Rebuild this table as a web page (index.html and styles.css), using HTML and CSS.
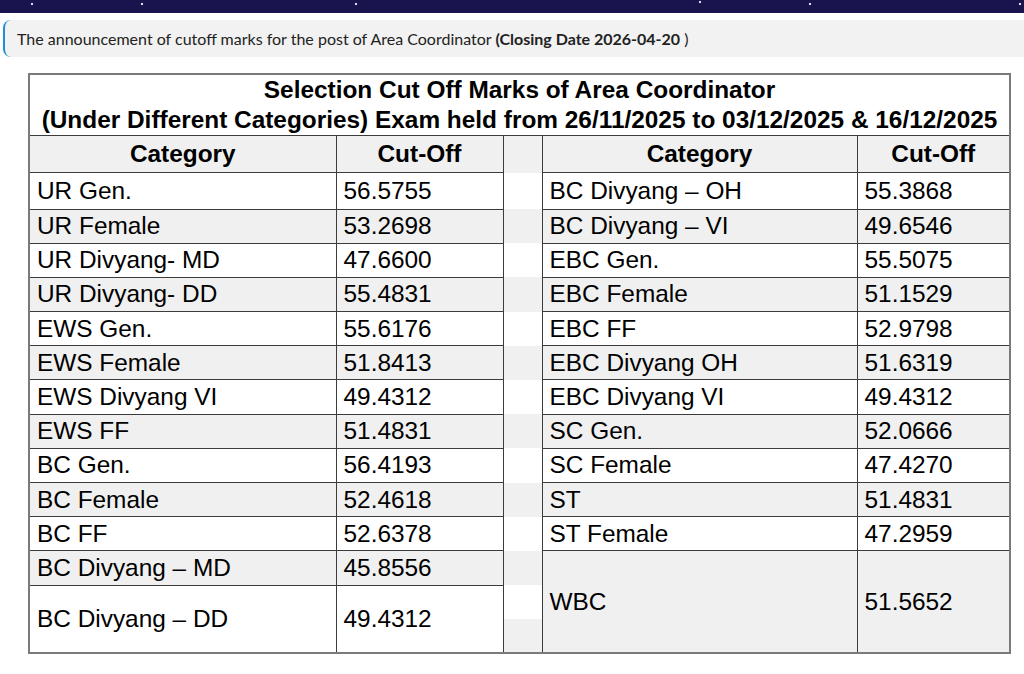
FILE: index.html
```html
<!DOCTYPE html>
<html lang="en">
<head>
<meta charset="utf-8">
<title>Cut Off Marks</title>
<link rel="stylesheet" href="styles.css">
</head>
<body>
<div class="topbar"></div>
<div class="notice">
  <span>The announcement of cutoff marks for the post of Area Coordinator <b>(Closing Date 2026-04-20</b> )</span>
</div>
<table class="cutoff">
  <colgroup>
    <col class="c1"><col class="c2"><col class="c3"><col class="c4"><col class="c5">
  </colgroup>
  <thead>
    <tr class="title-row">
      <th colspan="5" class="title">Selection Cut Off Marks of Area Coordinator<br>(Under Different Categories) Exam held from 26/11/2025 to 03/12/2025 &amp; 16/12/2025</th>
    </tr>
    <tr class="head">
      <th>Category</th><th>Cut-Off</th><th class="mid"></th><th>Category</th><th>Cut-Off</th>
    </tr>
  </thead>
  <tbody>
    <tr class="first"><td>UR Gen.</td><td>56.5755</td><td class="mid"></td><td>BC Divyang – OH</td><td>55.3868</td></tr>
    <tr class="alt"><td>UR Female</td><td>53.2698</td><td class="mid"></td><td>BC Divyang – VI</td><td>49.6546</td></tr>
    <tr><td>UR Divyang- MD</td><td>47.6600</td><td class="mid"></td><td>EBC Gen.</td><td>55.5075</td></tr>
    <tr class="alt"><td>UR Divyang- DD</td><td>55.4831</td><td class="mid"></td><td>EBC Female</td><td>51.1529</td></tr>
    <tr><td>EWS Gen.</td><td>55.6176</td><td class="mid"></td><td>EBC FF</td><td>52.9798</td></tr>
    <tr class="alt"><td>EWS Female</td><td>51.8413</td><td class="mid"></td><td>EBC Divyang OH</td><td>51.6319</td></tr>
    <tr><td>EWS Divyang VI</td><td>49.4312</td><td class="mid"></td><td>EBC Divyang VI</td><td>49.4312</td></tr>
    <tr class="alt"><td>EWS FF</td><td>51.4831</td><td class="mid"></td><td>SC Gen.</td><td>52.0666</td></tr>
    <tr><td>BC Gen.</td><td>56.4193</td><td class="mid"></td><td>SC Female</td><td>47.4270</td></tr>
    <tr class="alt"><td>BC Female</td><td>52.4618</td><td class="mid"></td><td>ST</td><td>51.4831</td></tr>
    <tr><td>BC FF</td><td>52.6378</td><td class="mid"></td><td>ST Female</td><td>47.2959</td></tr>
    <tr class="alt"><td>BC Divyang – MD</td><td>45.8556</td><td class="mid"></td><td rowspan="3">WBC</td><td rowspan="3">51.5652</td></tr>
    <tr><td rowspan="2">BC Divyang – DD</td><td rowspan="2">49.4312</td><td class="mid"></td></tr>
    <tr class="alt"><td class="mid"></td></tr>
  </tbody>
</table>
</body>
</html>
```

FILE: styles.css
```css
html, body {
  margin: 0;
  padding: 0;
  background: #ffffff;
}

.topbar {
  height: 13px;
  background:
    radial-gradient(circle at 32px 4px, #d8d8f0 0 1px, transparent 1.6px),
    radial-gradient(circle at 142px 4px, #d8d8f0 0 1px, transparent 1.6px),
    radial-gradient(circle at 356px 4px, #d8d8f0 0 1px, transparent 1.6px),
    radial-gradient(circle at 700px 2px, #d8d8f0 0 1px, transparent 1.6px),
    radial-gradient(circle at 810px 4px, #d8d8f0 0 1px, transparent 1.6px),
    radial-gradient(circle at 1020px 4px, #d8d8f0 0 1px, transparent 1.6px),
    #19144d;
}

.notice {
  margin: 7px 0 0 3px;
  height: 37px;
  display: flex;
  align-items: center;
  padding-left: 12px;
  background: #f2f2f2;
  border-left: 2px solid #1e8fd6;
  border-radius: 8px 0 0 8px;
  font-family: "Lato", "Open Sans", sans-serif;
  font-size: 16px;
  color: #222;
}

.notice b {
  font-weight: 700;
}

.cutoff {
  margin: 16px 0 0 28px;
  width: 981px;
  table-layout: fixed;
  border-collapse: collapse;
  border: 2px solid #7a7a7a;
  font-family: "Liberation Sans", Arial, sans-serif;
  font-size: 24.4px;
  color: #000;
}

.c1 { width: 307px; }
.c2 { width: 167px; }
.c3 { width: 39px; }
.c4 { width: 315px; }
.c5 { width: 153px; }

.cutoff th,
.cutoff td {
  border: 1px solid #3c3c3c;
  padding: 0 7px;
  text-align: left;
  vertical-align: middle;
  white-space: nowrap;
  overflow: visible;
}

.cutoff .title-row th {
  padding: 0;
  text-align: center;
  font-weight: 700;
  line-height: 30px;
  background: #fff;
}

.cutoff .head th {
  height: 36px;
  text-align: center;
  font-weight: 700;
  background: #f0f0f0;
}

.cutoff tbody tr {
  height: 34.2px;
}

.cutoff tbody tr.first {
  height: 36.5px;
}

.cutoff tbody td {
  background: #fff;
}

.cutoff tbody tr.alt td {
  background: #f0f0f0;
}

.cutoff .mid {
  border-top: none;
  border-bottom: none;
}
```
